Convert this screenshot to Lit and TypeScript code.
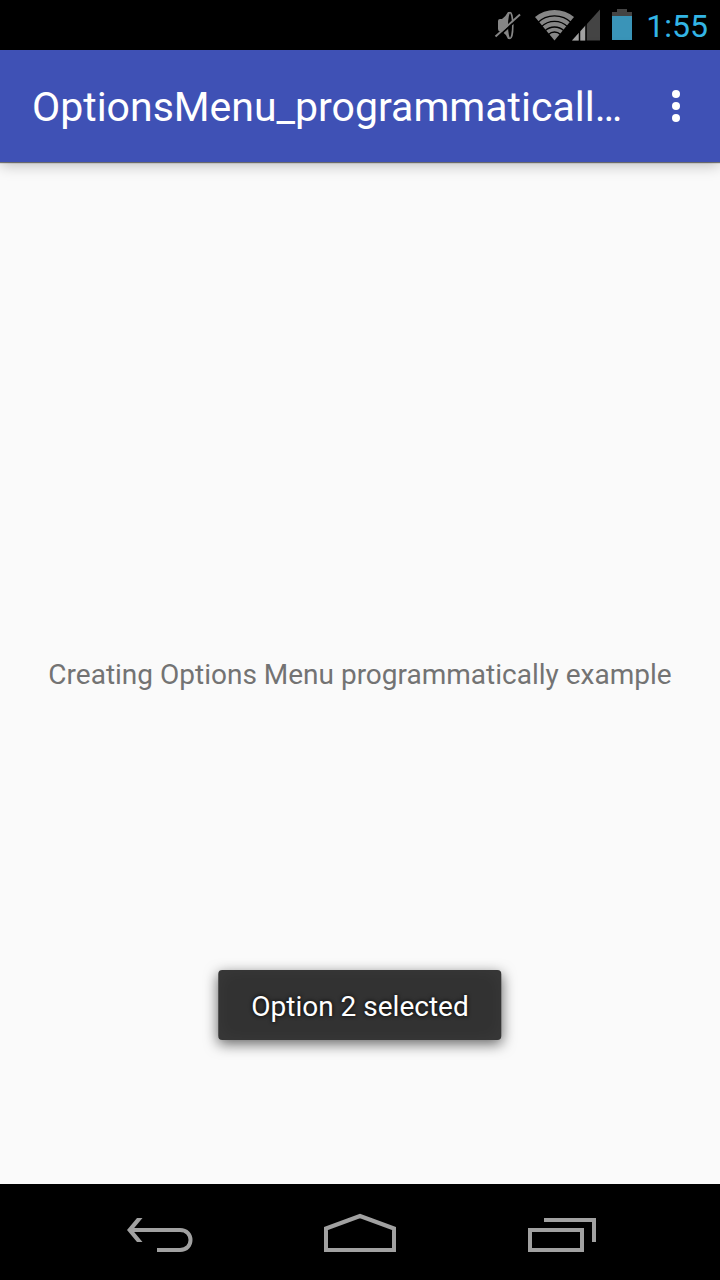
import { LitElement, html, css } from "lit";
import { customElement, property } from "lit/decorators.js";

@customElement("status-bar")
class StatusBar extends LitElement {
  @property() time = "";

  static styles = css`
    :host {
      display: flex;
      align-items: center;
      justify-content: flex-end;
      height: 50px;
      padding-right: 12px;
      background: #000;
      color: #33b5e5;
      font-size: 32px;
      line-height: 50px;
    }
    svg {
      display: block;
      flex: none;
    }
    .mute {
      margin-right: 14px;
    }
    .signal {
      margin-right: 12px;
    }
    .battery {
      margin-right: 14px;
    }
    .clock {
      padding-top: 2px;
    }
  `;

  render() {
    return html`
      <svg class="mute" width="27" height="50" viewBox="494 0 27 50" role="img" aria-label="Muted">
        <path d="M498 21 Q498 19 500 19 H502 Q506 16 508 12 H510 V39 H508 Q506 34 502 31.500 H500 Q498 31 498 29Z" fill="#868686" />
        <ellipse cx="510" cy="25.500" rx="2.800" ry="13" fill="#000" stroke="#868686" stroke-width="1.600" />
        <path d="M496 38.500 L521 16" stroke="#000" stroke-width="2" />
        <path d="M495.500 36.500 L520 14.500" stroke="#868686" stroke-width="2" />
      </svg>
      <svg width="37" height="50" viewBox="535 0 37 50" overflow="visible" role="img" aria-label="Wi-Fi">
        <path d="M554.500 40.500 L535 17 A30.500 30.500 0 0 1 574 17Z" fill="#868686" />
        <g fill="none" stroke="#000" stroke-width="1.300">
          <path d="M537.300 23 A24.500 24.500 0 0 1 571.700 23" />
          <path d="M541.200 26.900 A19 19 0 0 1 567.800 26.900" />
          <path d="M545 30.900 A13.500 13.500 0 0 1 564 30.900" />
          <path d="M548.500 34.500 A8.500 8.500 0 0 1 560.500 34.500" />
        </g>
      </svg>
      <svg class="signal" width="28" height="50" viewBox="572 0 28 50" role="img" aria-label="Signal">
        <path d="M572 40.500 L600 9.500 V40.500Z" fill="#444" />
        <path d="M572 40.500 L586 25 V40.500Z" fill="#a2a2a2" />
        <path d="M579.500 30 V41 M586 24 V41" stroke="#000" stroke-width="1.500" />
      </svg>
      <svg class="battery" width="20" height="50" viewBox="612 0 20 50" role="img" aria-label="Battery">
        <path d="M612 12 H617 V9 H627 V12 H632 V16 H612Z" fill="#444" />
        <path d="M612 16 H632 V40 H612Z" fill="#3a94b8" />
      </svg>
      <time class="clock">${this.time}</time>
    `;
  }
}

@customElement("app-bar")
class AppBar extends LitElement {
  @property() heading = "";

  static styles = css`
    :host {
      display: flex;
      align-items: center;
      height: 112px;
      padding-left: 32px;
      background: #3f51b5;
      color: #fff;
      box-shadow: 0 1px 1px rgba(0, 0, 0, 0.5), 0 3px 14px rgba(0, 0, 0, 0.25);
      position: relative;
    }
    h1 {
      flex: 1;
      min-width: 0;
      margin: 0;
      padding-top: 2px;
      font-size: 41px;
      line-height: 56px;
      font-weight: 400;
      white-space: nowrap;
      overflow: hidden;
      text-overflow: ellipsis;
    }
    .overflow {
      display: flex;
      align-items: center;
      justify-content: center;
      width: 88px;
      height: 96px;
      padding: 0;
      border: 0;
      background: none;
      color: inherit;
    }
  `;

  render() {
    return html`
      <h1>${this.heading}</h1>
      <button class="overflow" aria-label="More options">
        <svg width="8" height="32" viewBox="0 0 8 32" fill="currentColor">
          <circle cx="4" cy="4" r="4" />
          <circle cx="4" cy="16" r="4" />
          <circle cx="4" cy="28" r="4" />
        </svg>
      </button>
    `;
  }
}

@customElement("nav-bar")
class NavBar extends LitElement {
  static styles = css`
    :host {
      display: flex;
      height: 96px;
      padding: 0 60px;
      background: #000;
    }
    button {
      flex: 1;
      display: flex;
      align-items: center;
      justify-content: center;
      padding: 0;
      border: 0;
      background: none;
      color: #a1a1a1;
    }
    svg {
      display: block;
    }
  `;

  render() {
    return html`
      <button aria-label="Back">
        <svg width="80" height="96" viewBox="120 1184 80 96" fill="none" stroke="currentColor" stroke-width="4">
          <path d="M131 1230 H180 C194 1230 194 1250 180 1250 H157" />
          <path d="M127 1230 L137 1218 H142.500 L132.500 1230 L142.500 1242 H137Z" fill="currentColor" stroke="none" />
        </svg>
      </button>
      <button aria-label="Home">
        <svg width="80" height="96" viewBox="320 1184 80 96" fill="none" stroke="currentColor" stroke-width="4">
          <path d="M326 1250 V1228.500 L360 1216 L394 1228.500 V1250Z" />
        </svg>
      </button>
      <button aria-label="Recent apps">
        <svg width="80" height="96" viewBox="520 1184 80 96" fill="none" stroke="currentColor" stroke-width="4">
          <path d="M530 1230 H582 V1250 H530Z M544 1220 H594 V1242" />
        </svg>
      </button>
    `;
  }
}

@customElement("app-root")
class AppRoot extends LitElement {
  static styles = css`
    :host {
      display: flex;
      flex-direction: column;
      min-height: 100vh;
      background: #fafafa;
      font-family: Roboto, "Liberation Sans", sans-serif;
    }
    main {
      flex: 1;
      display: flex;
      align-items: center;
      justify-content: center;
      position: relative;
      color: #737373;
      font-size: 28px;
      line-height: 36px;
    }
    p {
      margin: 0;
      padding: 4px 0 0;
      text-align: center;
    }
    .toast {
      position: absolute;
      bottom: 144px;
      left: 50%;
      transform: translateX(-50%);
      box-sizing: border-box;
      padding: 19px 33px 15px;
      border-radius: 4px;
      background: #323232;
      box-shadow: inset 0 0 20px rgba(255, 255, 255, 0.04), 0 4px 14px rgba(0, 0, 0, 0.6);
      color: #fff;
      white-space: nowrap;
      text-shadow: 0 0 4px #000;
    }
  `;

  render() {
    return html`
      <status-bar time="1:55"></status-bar>
      <app-bar heading="OptionsMenu_programmaticall…"></app-bar>
      <main>
        <p>Creating Options Menu programmatically example</p>
        <div class="toast" role="status">Option 2 selected</div>
      </main>
      <nav-bar></nav-bar>
    `;
  }
}
